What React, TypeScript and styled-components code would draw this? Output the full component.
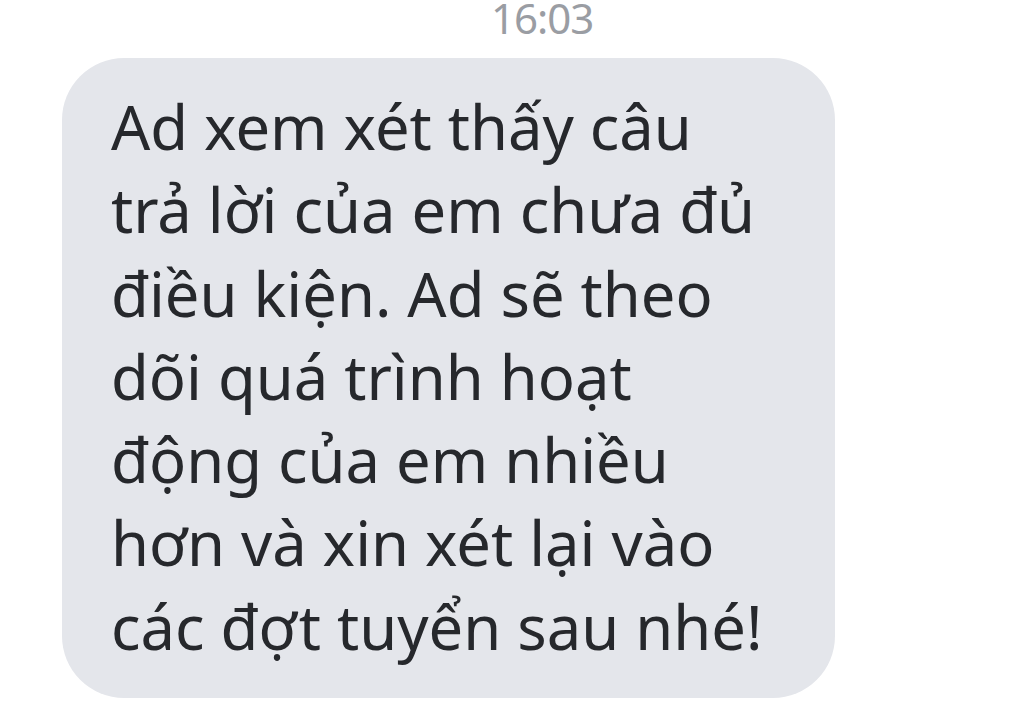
import React from "react";
import styled, { createGlobalStyle } from "styled-components";

const lines = [
  "Ad xem xét thấy câu",
  "trả lời của em chưa đủ",
  "điều kiện. Ad sẽ theo",
  "dõi quá trình hoạt",
  "động của em nhiều",
  "hơn và xin xét lại vào",
  "các đợt tuyển sau nhé!",
];

const GlobalStyle = createGlobalStyle`
  html, body {
    margin: 0;
    padding: 0;
    background: #ffffff;
    overflow: hidden;
  }
  body {
    font-family: "Noto Sans", "Open Sans", sans-serif;
  }
`;

const Chat = styled.div`
  width: 1024px;
  height: 702px;
  display: flex;
  flex-direction: column;
  overflow: hidden;
`;

const Timestamp = styled.div`
  height: 58px;
  padding-left: 491px;
  font-size: 42px;
  line-height: 36px;
  color: #9a9da3;
  letter-spacing: -1px;
`;

const Bubble = styled.div`
  align-self: flex-start;
  margin-left: 62px;
  width: 773px;
  box-sizing: border-box;
  padding: 27px 0 30px 49px;
  background: #e4e6eb;
  border-radius: 62px;
  color: #26282c;
`;

const Line = styled.div`
  font-size: 61.5px;
  line-height: 83.3px;
  white-space: nowrap;
`;

export default function App() {
  return (
    <Chat>
      <GlobalStyle />
      <Timestamp>16:03</Timestamp>
      <Bubble>
        {lines.map((text, i) => (
          <Line key={i}>{text}</Line>
        ))}
      </Bubble>
    </Chat>
  );
}
